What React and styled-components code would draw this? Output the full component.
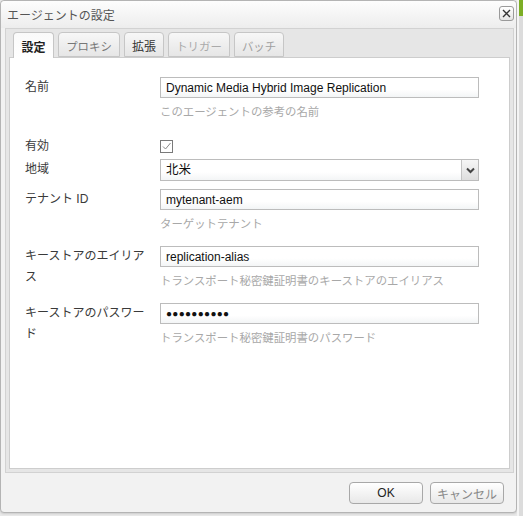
import React from 'react';
import styled, { createGlobalStyle } from 'styled-components';

const Global = createGlobalStyle`
  html, body {
    margin: 0;
    padding: 0;
    background: #e9e9e9;
  }
  body {
    font-family: "Liberation Sans", "Noto Sans CJK JP", sans-serif;
    font-size: 12px;
  }
  * {
    box-sizing: border-box;
  }
`;

const Page = styled.div`
  display: flex;
  width: 523px;
  height: 516px;
  overflow: hidden;
`;

const Dialog = styled.div`
  display: flex;
  flex-direction: column;
  width: 517px;
  height: 513px;
  border: 1px solid #b4b4b4;
  border-radius: 4px;
  background: #f2f2f2;
  box-shadow: 0 1px 2px rgba(0, 0, 0, 0.12);
`;

// whatever lies behind the dialog on the right edge
const Backdrop = styled.div`
  flex: 1;
  display: flex;
  flex-direction: column;
  background: #dcdcdc;
  border-left: 2px solid #f4f4f4;
`;

const BackdropBar = styled.div`
  height: 16px;
  background: #7cae25;
`;

const Header = styled.div`
  display: flex;
  align-items: center;
  justify-content: space-between;
  height: 27px;
  padding: 0 2px 0 6px;
  background: linear-gradient(#fdfdfd, #ededed);
  border-radius: 4px 4px 0 0;
`;

const Title = styled.span`
  color: #555;
  font-size: 12px;
`;

const CloseButton = styled.button`
  display: flex;
  align-items: center;
  justify-content: center;
  width: 15px;
  height: 15px;
  padding: 0;
  margin-top: -2px;
  border: 1px solid #9a9a9a;
  border-radius: 3px;
  background: linear-gradient(#ffffff, #e4e4e4);
`;

const TabBox = styled.div`
  flex: 1;
  display: flex;
  flex-direction: column;
  margin: 0 2px 0 4px;
  padding: 3px 3px 3px 3px;
  background: #e6e6e6;
  border: 1px solid #d2d2d2;
`;

const TabBar = styled.div`
  display: flex;
  gap: 4px;
  padding-left: 4px;
  position: relative;
  z-index: 1;
`;

const Tab = styled.div`
  width: ${p => p.$w}px;
  height: ${p => (p.$active ? '26px' : '25px')};
  margin-bottom: ${p => (p.$active ? '-1px' : '0')};
  padding-top: 2px;
  display: flex;
  align-items: center;
  justify-content: center;
  white-space: nowrap;
  border: 1px solid #c6c6c6;
  border-bottom: ${p => (p.$active ? 'none' : '1px solid #c6c6c6')};
  border-radius: 4px 4px 0 0;
  background: ${p =>
    p.$active ? 'linear-gradient(#fafafa, #ffffff)' : 'linear-gradient(#f7f7f7, #e6e6e6)'};
  color: ${p => p.$color};
  font-weight: ${p => (p.$active ? 'bold' : 'normal')};
  font-size: ${p => (p.$kana ? '11.4px' : '12px')};
`;

const Panel = styled.div`
  flex: 1;
  background: #fff;
  border: 1px solid #cdcdcd;
  padding: 0 0 0 15px;
`;

const Field = styled.div`
  display: grid;
  grid-template-columns: 135px 319px;
  margin-top: ${p => p.$mt}px;
  color: #333;
`;

const Label = styled.div`
  line-height: 21px;
  padding-right: 12px;
  color: #3a3a3a;
`;

const Control = styled.div`
  display: flex;
  flex-direction: column;
`;

const TextInput = styled.input`
  height: 21px;
  width: 100%;
  margin: 0;
  padding: 0 5px;
  border: 1px solid #bcbcbc;
  background: linear-gradient(#ffffff 60%, #f3f5f6);
  font-family: "Liberation Sans", "Noto Sans CJK JP", sans-serif;
  font-size: ${p => (p.$dots ? '10px' : '12px')};
  letter-spacing: ${p => (p.$dots ? '0.3px' : '0')};
  color: #111;
  outline: none;
`;

const Help = styled.div`
  margin-top: 6px;
  line-height: 16px;
  color: #a8a8a8;
  font-size: 11.4px;
`;

const CheckRow = styled.div`
  display: grid;
  grid-template-columns: 135px 319px;
  margin-top: ${p => p.$mt}px;
  height: 13px;
  align-items: center;
`;

const CheckLabel = styled.div`
  color: #3a3a3a;
  line-height: 13px;
  margin-top: 1px;
`;

const CheckBox = styled.div`
  width: 13px;
  height: 13px;
  border: 1px solid #7a7a7a;
  background: #fff;
  display: flex;
  align-items: center;
  justify-content: center;
`;

const Select = styled.div`
  display: flex;
  height: 22px;
  border: 1px solid #bcbcbc;
  background: linear-gradient(#ffffff 60%, #f3f5f6);
`;

const SelectValue = styled.div`
  flex: 1;
  padding: 0 5px;
  line-height: 20px;
  font-size: 12.5px;
  color: #111;
`;

const SelectArrow = styled.div`
  width: 17px;
  display: flex;
  align-items: center;
  justify-content: center;
  border-left: 1px solid #c4c4c4;
  background: linear-gradient(#f6f6f6, #dedede);
`;

const Footer = styled.div`
  display: flex;
  justify-content: flex-end;
  gap: 7px;
  padding: 9px 12px 8px 0;
`;

const Button = styled.button`
  width: ${p => p.$w}px;
  height: 22px;
  border: 1px solid #a8a8a8;
  border-radius: 4px;
  background: linear-gradient(#ffffff, #e8e8e8);
  font-family: "Liberation Sans", "Noto Sans CJK JP", sans-serif;
  font-size: 12px;
  color: ${p => p.$color};
  padding: 0;
`;

const tabs = [
  { name: '設定', color: '#222', w: 41, active: true },
  { name: 'プロキシ', color: '#777', w: 62, kana: true },
  { name: '拡張', color: '#333', w: 40 },
  { name: 'トリガー', color: '#aaa', w: 62, kana: true },
  { name: 'バッチ', color: '#a0a0a0', w: 50, kana: true }
];

const App = () => (
  <Page>
    <Global />
    <Dialog>
      <Header>
        <Title>エージェントの設定</Title>
        <CloseButton aria-label="close">
          <svg width="9" height="9" viewBox="0 0 9 9">
            <path d="M1 1 L8 8 M8 1 L1 8" stroke="#333" strokeWidth="1.4" />
          </svg>
        </CloseButton>
      </Header>
      <TabBox>
        <TabBar>
          {tabs.map(t => (
            <Tab key={t.name} $active={t.active} $color={t.color} $w={t.w} $kana={t.kana}>
              {t.name}
            </Tab>
          ))}
        </TabBar>
        <Panel>
          <Field $mt={19}>
            <Label>名前</Label>
            <Control>
              <TextInput readOnly value="Dynamic Media Hybrid Image Replication" />
              <Help>このエージェントの参考の名前</Help>
            </Control>
          </Field>
          <CheckRow $mt={19}>
            <CheckLabel>有効</CheckLabel>
            <CheckBox>
              <svg width="11" height="11" viewBox="0 0 11 11">
                <path d="M2 5.5 L4.5 8 L9.5 2" fill="none" stroke="#888" strokeWidth="1" />
              </svg>
            </CheckBox>
          </CheckRow>
          <Field $mt={7}>
            <Label>地域</Label>
            <Select>
              <SelectValue>北米</SelectValue>
              <SelectArrow>
                <svg width="9" height="7" viewBox="0 0 9 7">
                  <path d="M1 1.5 L4.5 5 L8 1.5" fill="none" stroke="#444" strokeWidth="2" />
                </svg>
              </SelectArrow>
            </Select>
          </Field>
          <Field $mt={8}>
            <Label>テナント ID</Label>
            <Control>
              <TextInput readOnly value="mytenant-aem" />
              <Help>ターゲットテナント</Help>
            </Control>
          </Field>
          <Field $mt={14}>
            <Label>キーストアのエイリアス</Label>
            <Control>
              <TextInput readOnly value="replication-alias" />
              <Help>トランスポート秘密鍵証明書のキーストアのエイリアス</Help>
            </Control>
          </Field>
          <Field $mt={14}>
            <Label>キーストアのパスワード</Label>
            <Control>
              <TextInput readOnly $dots value={'\u25CF'.repeat(10)} />
              <Help>トランスポート秘密鍵証明書のパスワード</Help>
            </Control>
          </Field>
        </Panel>
      </TabBox>
      <Footer>
        <Button $w={74} $color="#222">OK</Button>
        <Button $w={74} $color="#888">キャンセル</Button>
      </Footer>
    </Dialog>
    <Backdrop>
      <BackdropBar />
    </Backdrop>
  </Page>
);

export default App;
